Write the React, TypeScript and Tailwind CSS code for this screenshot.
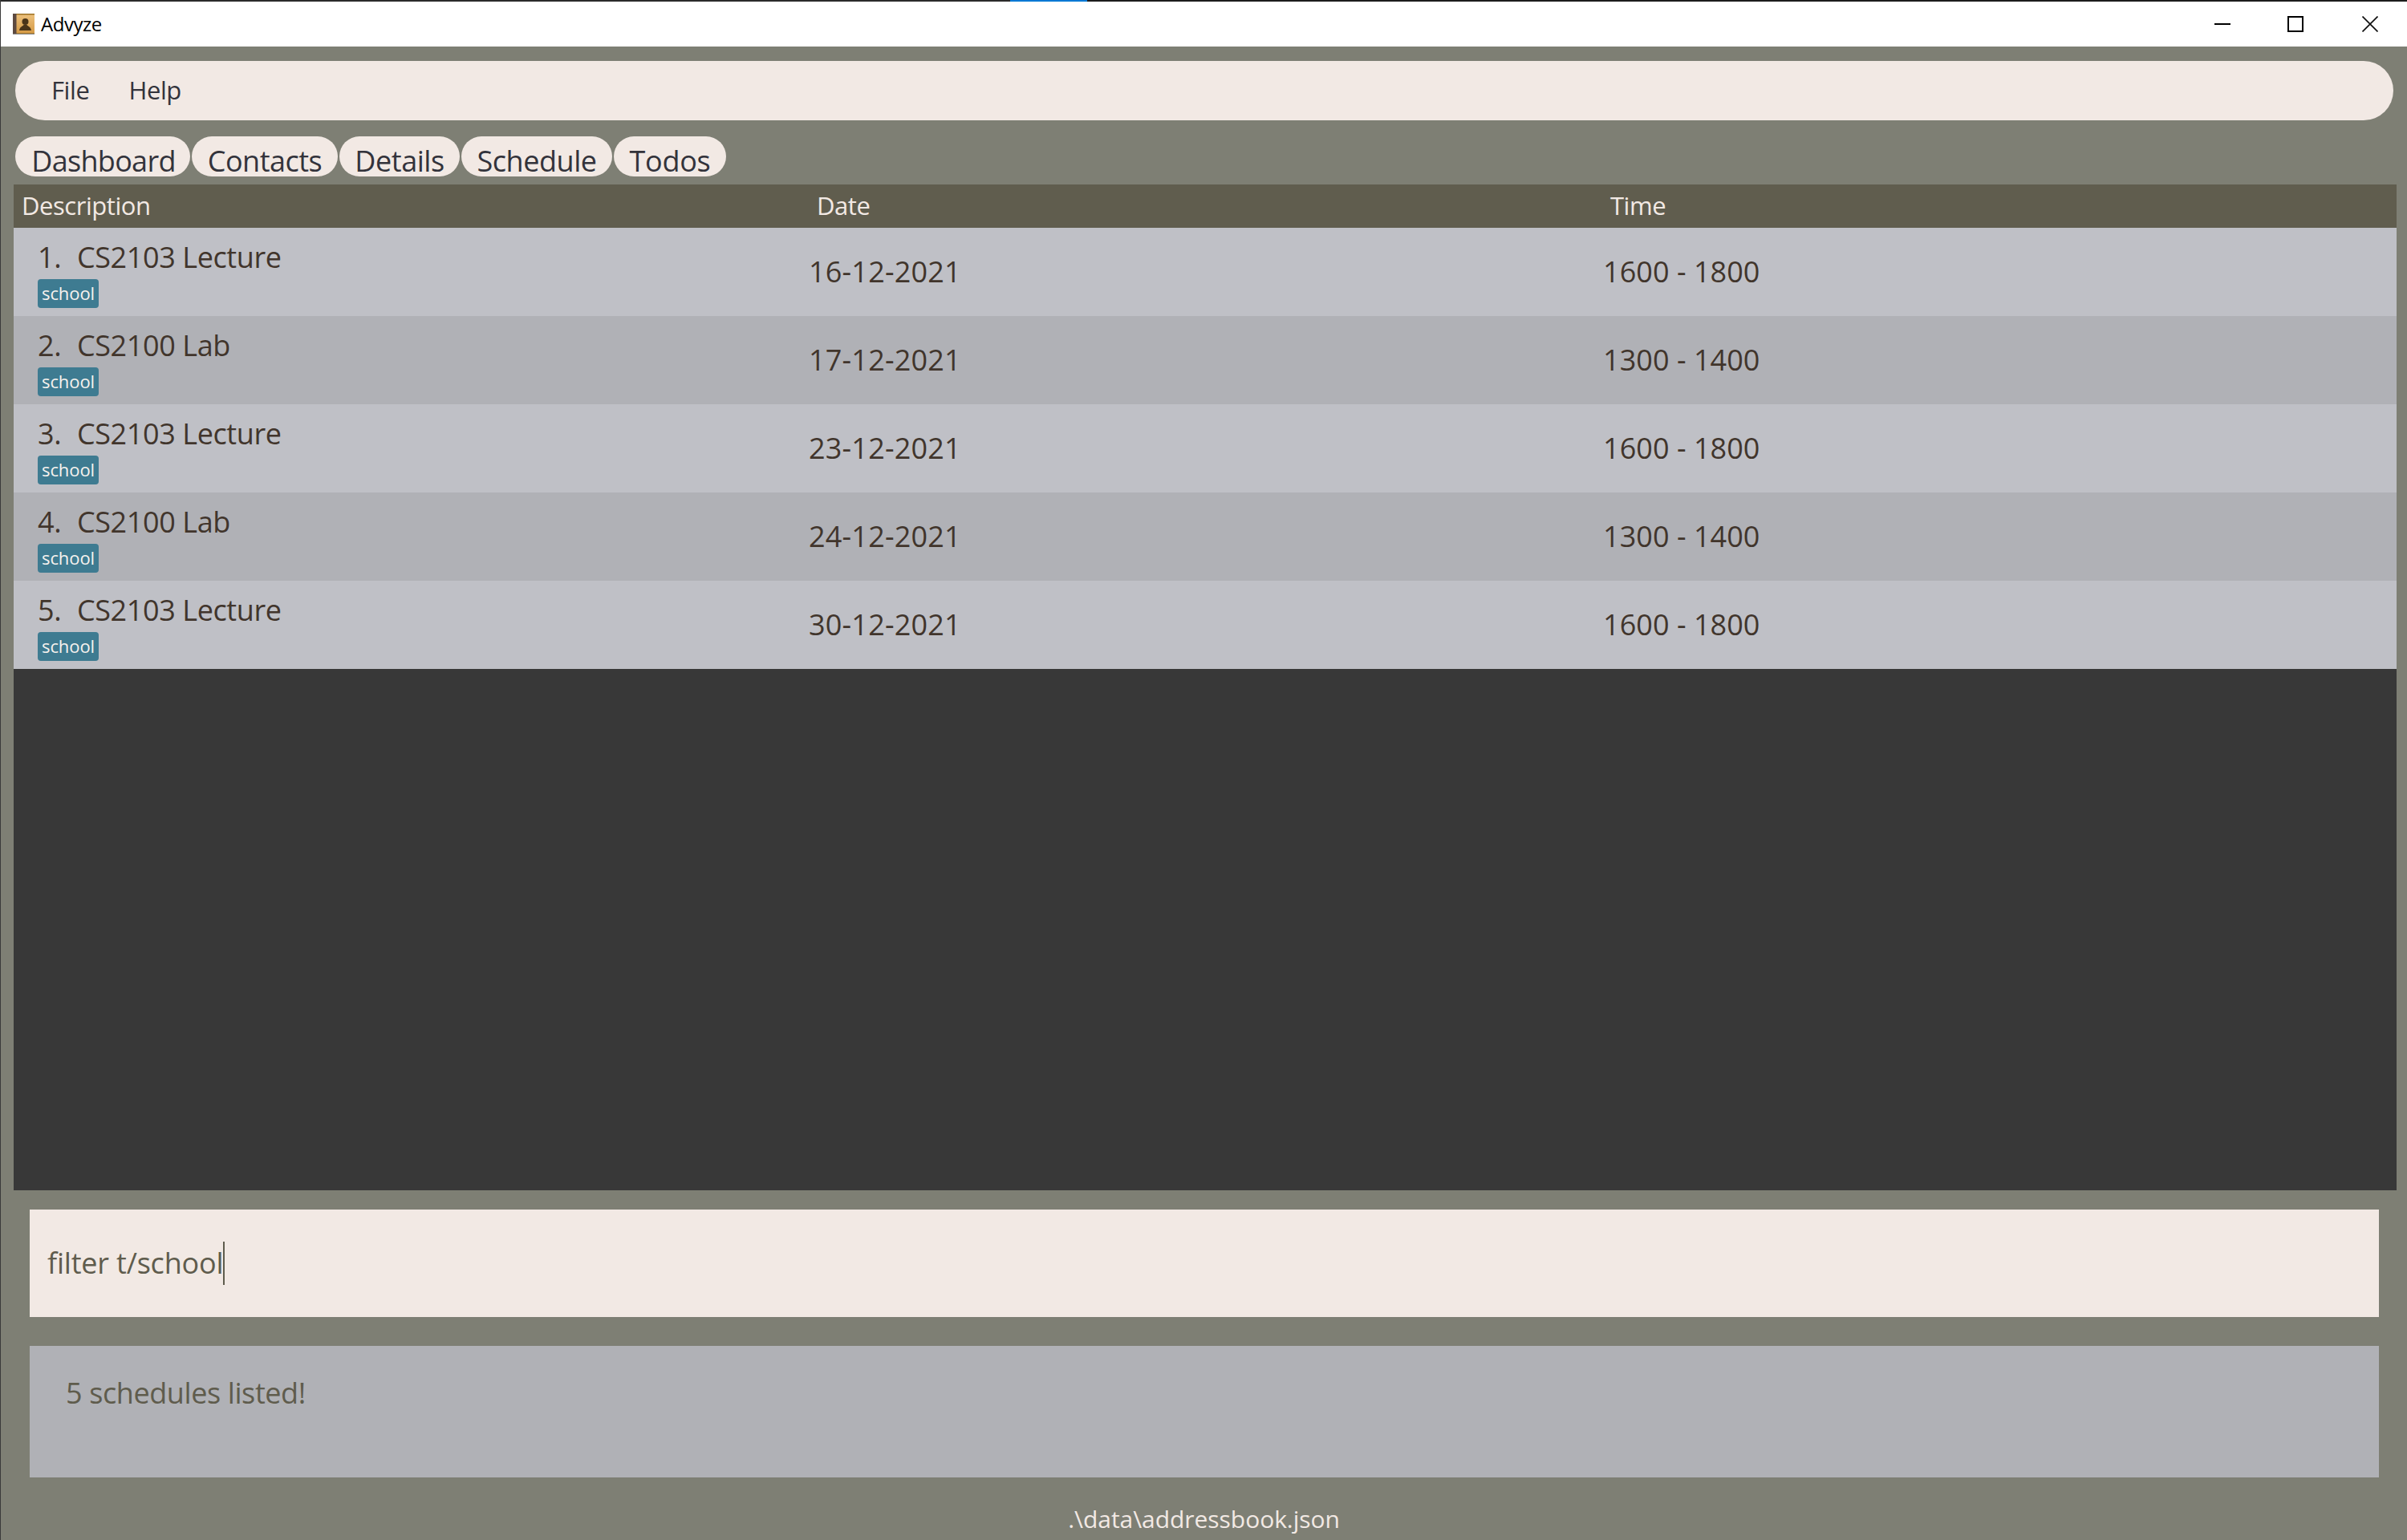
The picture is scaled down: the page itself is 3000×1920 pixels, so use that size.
const F = "font-['Open_Sans',_'Noto_Sans',sans-serif]";

const rows = [
  { n: 1, d: "CS2103 Lecture", date: "16-12-2021", t: "1600 - 1800" },
  { n: 2, d: "CS2100 Lab", date: "17-12-2021", t: "1300 - 1400" },
  { n: 3, d: "CS2103 Lecture", date: "23-12-2021", t: "1600 - 1800" },
  { n: 4, d: "CS2100 Lab", date: "24-12-2021", t: "1300 - 1400" },
  { n: 5, d: "CS2103 Lecture", date: "30-12-2021", t: "1600 - 1800" },
];
const tabs = [
  { t: "Dashboard", c: "w-[218px] pl-[2px] tracking-[-0.7px]" },
  { t: "Contacts", c: "w-[182px] tracking-[-0.5px]" },
  { t: "Details", c: "w-[150px] tracking-[-0.45px]" },
  { t: "Schedule", c: "w-[188px] tracking-[-0.45px]" },
  { t: "Todos", c: "w-[140px] tracking-[-0.3px]" },
];

function BookIcon() {
  return (
    <svg width="30" height="28" viewBox="0 0 30 28" className="shrink-0">
      <defs>
        <linearGradient id="cover" x1="0" y1="0" x2="0" y2="1">
          <stop offset="0" stopColor="#edc27f" />
          <stop offset="1" stopColor="#d59a45" />
        </linearGradient>
      </defs>
      <rect x="1" y="1" width="27" height="25" fill="url(#cover)" />
      <rect x="1" y="1" width="27" height="1.5" fill="#9c7124" />
      <rect x="1" y="25" width="27" height="1" fill="#a97c2f" />
      <rect x="1" y="1" width="4.5" height="25" fill="#5d4a40" />
      <circle cx="16.5" cy="11" r="4" fill="#4a3418" />
      <path d="M9 22 C10 17 13 17 14.5 15 L18.5 15 C20 17 23 17 24 22 Z" fill="#4a3418" />
      <rect x="1" y="26" width="27" height="1" fill="#8b8b8b" />
    </svg>
  );
}

export default function App() {
  return (
    <div className={`w-[3000px] h-[1920px] flex flex-col overflow-hidden bg-[#7e7f74] border-l border-[#3a3a3a] ${F}`}>
      <div className="h-[2px] -ml-[1px] flex shrink-0">
        <div className="w-[1259px] bg-[#2b2b2b]" />
        <div className="w-[96px] bg-[#0078d4]" />
        <div className="flex-1 bg-[#1c1c1c]" />
      </div>
      <div className="h-[56px] shrink-0 bg-white flex items-center pl-[14px] relative">
        <BookIcon />
        <span className="ml-[6px] text-[24px] tracking-[-0.45px] text-black">Advyze</span>
        <div className="ml-auto flex items-center pr-[36px]">
          <svg width="20" height="20" viewBox="0 0 20 20"><rect x="0" y="9" width="20" height="2" fill="#000" /></svg>
          <svg className="ml-[71px]" width="20" height="20" viewBox="0 0 20 20"><rect x="1" y="1" width="18" height="18" fill="none" stroke="#000" strokeWidth="2" /></svg>
          <svg className="ml-[73px]" width="20" height="20" viewBox="0 0 20 20"><path d="M0.5 0.5 L19.5 19.5 M19.5 0.5 L0.5 19.5" stroke="#111" strokeWidth="1.7" /></svg>
        </div>
      </div>
      <div className="mt-[18px] ml-[18px] mr-[17px] h-[74px] shrink-0 rounded-[37px] bg-[#f2e9e4] flex items-center pl-[45px] gap-[49px] text-[31px] tracking-[-0.4px] text-[#33333b]">
        <span className="-mt-[1px]">File</span>
        <span className="-mt-[1px]">Help</span>
      </div>
      <div className="mt-[20px] ml-[18px] h-[50px] shrink-0 flex gap-[2px]">
        {tabs.map((x) => (
          <div key={x.t} className={`h-[50px] rounded-[25px] bg-[#f2e9e4] flex items-end justify-center text-[36px] text-[#33333b] ${x.c}`}>
            <span className="leading-[38px]">{x.t}</span>
          </div>
        ))}
      </div>
      <div className="mt-[10px] ml-[16px] mr-[13px] h-[1254px] shrink-0 bg-[#383838] flex flex-col">
        <div className="h-[54px] shrink-0 bg-[#605d4e] grid grid-cols-[990px_990px_1fr] items-center text-[31px] tracking-[-0.45px] text-[#f2e9e4]">
          <span className="pl-[10px] -mt-[1px]">Description</span>
          <span className="pl-[11px] -mt-[1px]">Date</span>
          <span className="pl-[10px] -mt-[1px]">Time</span>
        </div>
        {rows.map((r, i) => (
          <div key={r.n} className={`h-[110px] shrink-0 grid grid-cols-[990px_990px_1fr] items-center text-[36px] text-[#41352c] ${i % 2 === 0 ? "bg-[#bfc0c6]" : "bg-[#b0b1b6]"}`}>
            <div className="pl-[30px] pt-[1px] flex flex-col items-start">
              <div className="leading-[50px] flex tracking-[-0.4px]">
                <span className="w-[49px]">{r.n}.</span>
                <span>{r.d}</span>
              </div>
              <div className="mt-[2px] h-[36px] w-[76px] flex items-center justify-center rounded-[4px] bg-[#3e7b91] text-[#f6f2ee] text-[22px] tracking-[-0.1px]">school</div>
            </div>
            <div className="pl-[1px] tracking-[0.2px]">{r.date}</div>
            <div className="pl-[1px] tracking-[0.05px]">{r.t}</div>
          </div>
        ))}
      </div>
      <div className="mt-[24px] ml-[36px] mr-[35px] h-[134px] shrink-0 bg-[#f2e9e4] flex items-center pl-[22px] text-[36px] tracking-[-0.2px] text-[#5f5c4d]">
        <span>filter t/school</span>
        <span className="w-[2px] h-[54px] bg-[#5f5c4d]" />
      </div>
      <div className="mt-[36px] ml-[36px] mr-[35px] h-[164px] shrink-0 bg-[#b0b1b6] pl-[45px] pt-[34px] text-[36px] leading-[50px] tracking-[-0.4px] text-[#5f5c4d]">
        5 schedules listed!
      </div>
      <div className="mt-[32px] text-center text-[30px] leading-[40px] tracking-[-0.05px] text-[#f2e9e4]">.\data\addressbook.json</div>
    </div>
  );
}
